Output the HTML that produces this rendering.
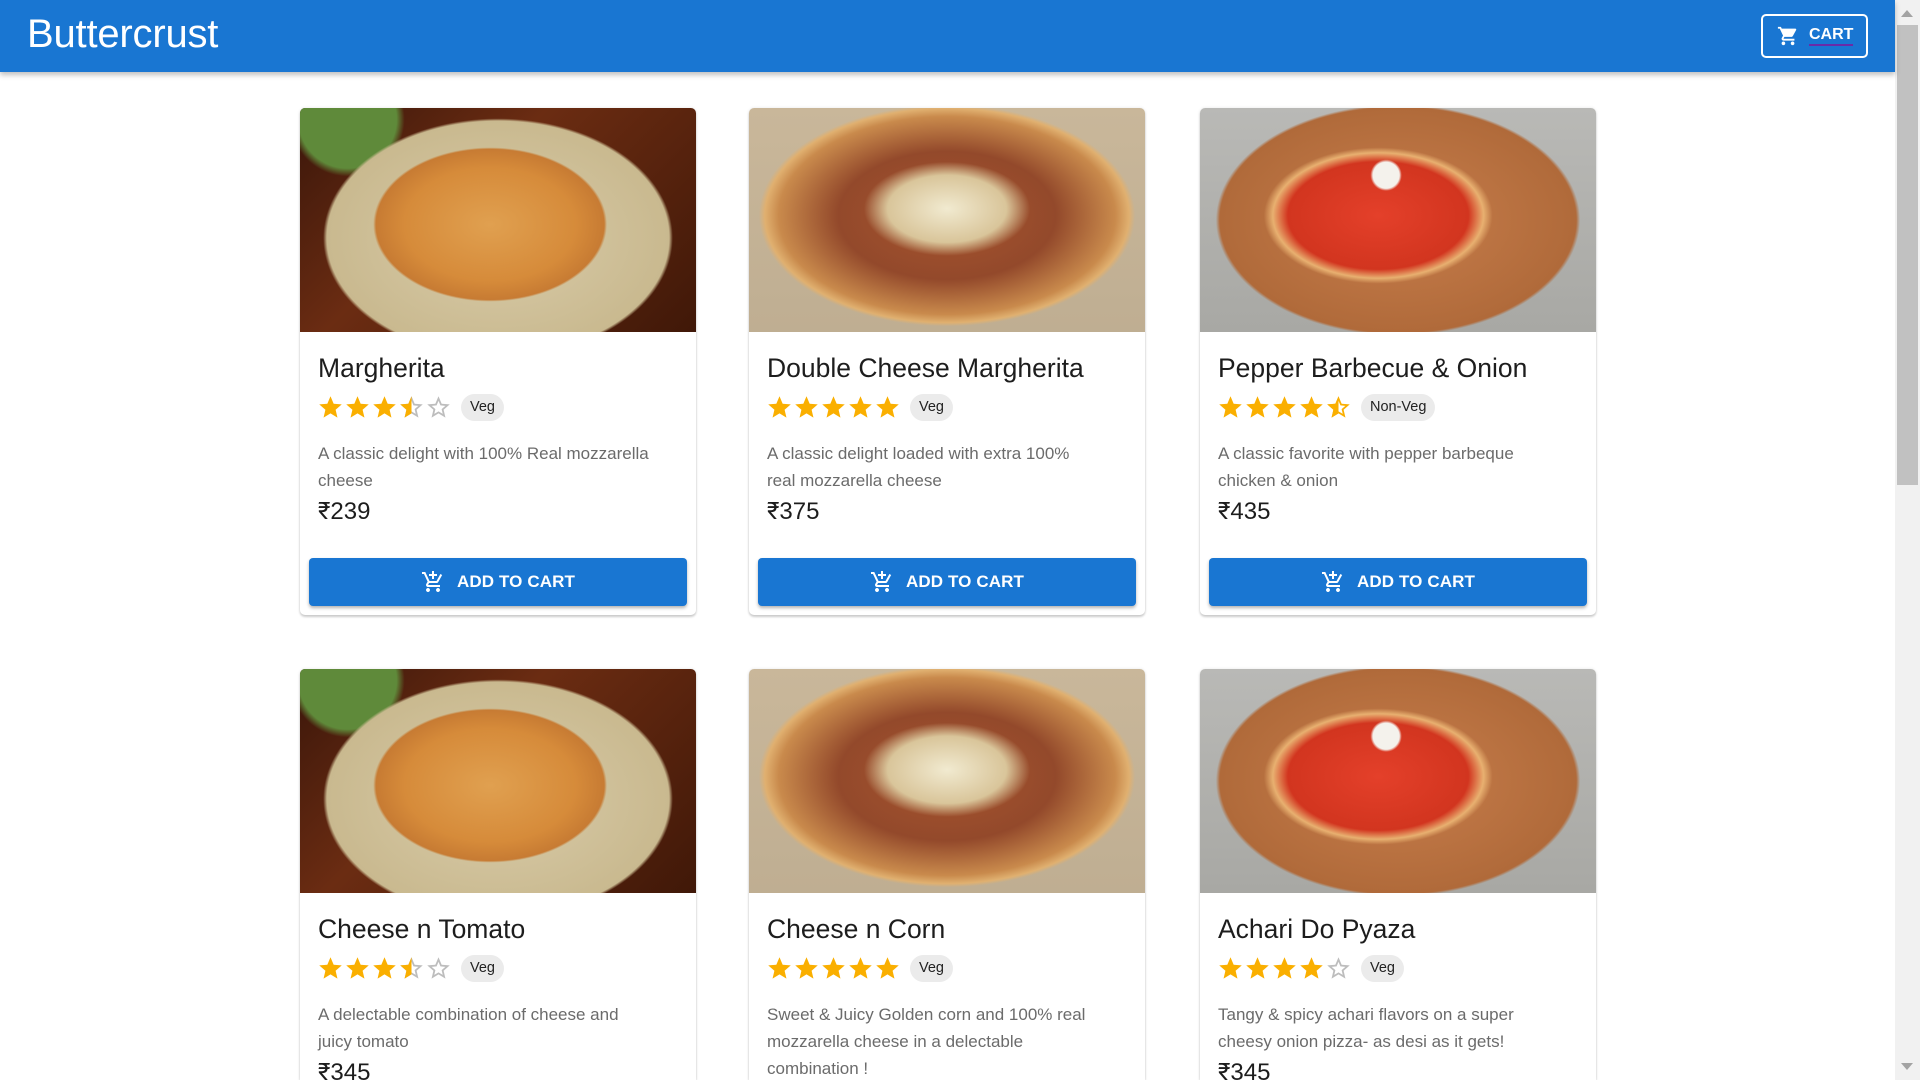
<!DOCTYPE html>
<html style="overflow:hidden;height:1080px"><head><meta charset="utf-8"><style>
*{box-sizing:border-box;margin:0;padding:0}
body{width:1920px;height:1080px;overflow:hidden;background:#fff;font-family:"Liberation Sans",Roboto,sans-serif;position:relative}
#wrap{position:absolute;left:0;top:0;width:1920px;height:1080px;overflow:hidden}
.bar{position:absolute;left:0;top:0;width:1895px;height:72px;background:#1976d2;box-shadow:0 3px 5px rgba(0,0,0,.25);z-index:2}
.bar h1{position:absolute;left:27px;top:12px;color:#fff;font-weight:400;font-size:40px;letter-spacing:-.2px}
.cartbtn{position:absolute;left:1761px;top:14px;width:107px;height:44px;border:2px solid #fff;border-radius:5px;color:#fff;font-weight:700;font-size:16px;display:flex;align-items:center;padding-left:14px}
.cartbtn span{margin-left:10px;border-bottom:2px solid #6a2aa8;line-height:18px}
.sb{position:absolute;left:1895px;top:0;width:25px;height:1080px;background:#f1f1f1}
.sb .th{position:absolute;left:2px;top:25px;width:21px;height:460px;background:#c1c1c1}
.sb .up{position:absolute;left:6px;top:10px;border:6px solid transparent;border-bottom:7px solid #a3a3a3;border-top:0}
.sb .dn{position:absolute;left:6px;top:1063px;border:6px solid transparent;border-top:7px solid #a3a3a3;border-bottom:0}
.card{position:absolute;width:396px;height:507px;background:#fff;border-radius:5px;box-shadow:0 2px 2px rgba(0,0,0,.18),0 0 3px rgba(0,0,0,.1);overflow:hidden}
.card.r2{height:411px;border-bottom-left-radius:0;border-bottom-right-radius:0}
.img{height:224px}
.body{position:relative}
.title{position:absolute;left:18px;top:21px;font-size:26.5px;color:#1d1d1d;white-space:nowrap}
.stars{position:absolute;left:17px;top:62px;display:flex;align-items:center}
.stars svg{width:27px;height:27px}
.chip{margin-left:9px;background:#ebebeb;border-radius:14px;height:27px;padding:0 9px;font-size:14.5px;color:#222;line-height:27px}
.desc{position:absolute;left:18px;top:108px;width:362px;font-size:17px;line-height:27px;color:#6b6b6b}
.price{position:absolute;left:18px;top:165px;font-size:24px;color:#1d1d1d}
.btn{position:absolute;left:9px;top:226px;width:378px;height:48px;background:#1976d2;border-radius:4px;box-shadow:0 2px 3px rgba(0,0,0,.3);color:#fff;font-weight:700;font-size:17px;display:flex;align-items:center;justify-content:center;letter-spacing:.1px}
.btn svg{margin-right:12px}
.p1{background:radial-gradient(ellipse 36% 42% at 48% 52%,#e0a050 0,#d68b3a 60%,#c77b33 80%,transparent 82%),radial-gradient(ellipse 48% 58% at 50% 58%,#d9ccaa 0,#c9b98f 90%,transparent 92%),radial-gradient(circle at 12% 5%,#5f8a3a 0,#5f8a3a 12%,transparent 14%),linear-gradient(135deg,#3a160a,#6b2c12 40%,#401808 100%)}
.p2{background:radial-gradient(ellipse 30% 30% at 50% 45%,#f1ead0 0,#d9c59a 50%,transparent 70%),radial-gradient(ellipse 50% 52% at 50% 48%,#a8552e 0,#93492b 55%,#c98a4c 85%,#e0b070 92%,transparent 95%),linear-gradient(#c9b79a,#bfae92)}
.p3{background:radial-gradient(circle at 47% 30%,#f4f2ec 0,#f4f2ec 5%,transparent 6%),radial-gradient(ellipse 38% 40% at 45% 48%,#e4402a 0,#d2351f 60%,#e8b070 70%,transparent 76%),radial-gradient(ellipse 50% 56% at 50% 50%,#c87e4c 0,#b06a3a 90%,transparent 92%),linear-gradient(#b9b9b6,#a8a8a4)}
</style></head><body><div id="wrap">
<div class="bar"><h1>Buttercrust</h1>
<div class="cartbtn"><svg width="22" height="22" viewBox="0 0 24 24" fill="#fff"><path d="M7 18c-1.1 0-2 .9-2 2s.9 2 2 2 2-.9 2-2-.9-2-2-2zM1 2v2h2l3.6 7.59-1.35 2.45c-.16.28-.25.61-.25.96 0 1.1.9 2 2 2h12v-2H7.42c-.14 0-.25-.11-.25-.25l.03-.12.9-1.63h7.45c.75 0 1.41-.41 1.75-1.03l3.58-6.49A1 1 0 0 0 20 4H5.21l-.94-2H1zm16 16c-1.1 0-2 .9-2 2s.9 2 2 2 2-.9 2-2-.9-2-2-2z"/></svg><span>CART</span></div></div>
<div class="sb"><div class="up"></div><div class="th"></div><div class="dn"></div></div>

<svg width="0" height="0" style="position:absolute"><defs>
<path id="st" d="M12 17.27 18.18 21l-1.64-7.03L22 9.24l-7.19-.61L12 2 9.19 8.63 2 9.24l5.46 4.73L5.82 21z"/>
<path id="so" d="M22 9.24l-7.19-.62L12 2 9.19 8.63 2 9.24l5.46 4.73L5.82 21 12 17.27 18.18 21l-1.63-7.03L22 9.24zM12 15.4l-3.76 2.27 1-4.28-3.32-2.88 4.38-.38L12 6.1l1.71 4.04 4.38.38-3.32 2.88 1 4.28L12 15.4z"/>
<path id="ac" d="M11 9h2V6h3V4h-3V1h-2v3H8v2h3v3zm-4 9c-1.1 0-1.99.9-1.99 2S5.9 22 7 22s2-.9 2-2-.9-2-2-2zm10 0c-1.1 0-1.99.9-1.99 2s.89 2 1.99 2 2-.9 2-2-.9-2-2-2zm-9.83-3.25.03-.12.9-1.63h7.45c.75 0 1.41-.41 1.75-1.03l3.86-7.01L19.42 4h-.01l-1.1 2-2.76 5H8.53l-.13-.27L6.16 6l-.95-2-.94-2H1v2h2l3.6 7.59-1.35 2.45c-.16.28-.25.61-.25.96 0 1.1.9 2 2 2h12v-2H7.42c-.13 0-.25-.11-.25-.25z"/>
</defs></svg>

<div class="card" style="left:300px;top:108px"><div class="img p1"></div><div class="body">
<div class="title">Margherita</div>
<div class="stars"><svg viewBox="0 0 24 24" fill="#faaf00"><use href="#st"/></svg><svg viewBox="0 0 24 24" fill="#faaf00"><use href="#st"/></svg><svg viewBox="0 0 24 24" fill="#faaf00"><use href="#st"/></svg><svg viewBox="0 0 24 24"><use href="#so" fill="#bdbdbd"/><path d="M12 2 9.19 8.63 2 9.24l5.46 4.73L5.82 21 12 17.27z" fill="#faaf00"/></svg><svg viewBox="0 0 24 24" fill="#bdbdbd"><use href="#so"/></svg><span class="chip">Veg</span></div>
<div class="desc">A classic delight with 100% Real mozzarella cheese</div>
<div class="price">₹239</div>
<div class="btn"><svg width="24" height="24" viewBox="0 0 24 24" fill="#fff"><use href="#ac"/></svg>ADD TO CART</div></div></div>

<div class="card" style="left:749px;top:108px"><div class="img p2"></div><div class="body">
<div class="title">Double Cheese Margherita</div>
<div class="stars"><svg viewBox="0 0 24 24" fill="#faaf00"><use href="#st"/></svg><svg viewBox="0 0 24 24" fill="#faaf00"><use href="#st"/></svg><svg viewBox="0 0 24 24" fill="#faaf00"><use href="#st"/></svg><svg viewBox="0 0 24 24" fill="#faaf00"><use href="#st"/></svg><svg viewBox="0 0 24 24" fill="#faaf00"><use href="#st"/></svg><span class="chip">Veg</span></div>
<div class="desc">A classic delight loaded with extra 100%<br>real mozzarella cheese</div>
<div class="price">₹375</div>
<div class="btn"><svg width="24" height="24" viewBox="0 0 24 24" fill="#fff"><use href="#ac"/></svg>ADD TO CART</div></div></div>

<div class="card" style="left:1200px;top:108px"><div class="img p3"></div><div class="body">
<div class="title">Pepper Barbecue &amp; Onion</div>
<div class="stars"><svg viewBox="0 0 24 24" fill="#faaf00"><use href="#st"/></svg><svg viewBox="0 0 24 24" fill="#faaf00"><use href="#st"/></svg><svg viewBox="0 0 24 24" fill="#faaf00"><use href="#st"/></svg><svg viewBox="0 0 24 24" fill="#faaf00"><use href="#st"/></svg><svg viewBox="0 0 24 24"><use href="#so" fill="#faaf00"/><path d="M12 2 9.19 8.63 2 9.24l5.46 4.73L5.82 21 12 17.27z" fill="#faaf00"/></svg><span class="chip">Non-Veg</span></div>
<div class="desc">A classic favorite with pepper barbeque<br>chicken &amp; onion</div>
<div class="price">₹435</div>
<div class="btn"><svg width="24" height="24" viewBox="0 0 24 24" fill="#fff"><use href="#ac"/></svg>ADD TO CART</div></div></div>

<div class="card r2" style="left:300px;top:669px"><div class="img p1"></div><div class="body">
<div class="title">Cheese n Tomato</div>
<div class="stars"><svg viewBox="0 0 24 24" fill="#faaf00"><use href="#st"/></svg><svg viewBox="0 0 24 24" fill="#faaf00"><use href="#st"/></svg><svg viewBox="0 0 24 24" fill="#faaf00"><use href="#st"/></svg><svg viewBox="0 0 24 24"><use href="#so" fill="#bdbdbd"/><path d="M12 2 9.19 8.63 2 9.24l5.46 4.73L5.82 21 12 17.27z" fill="#faaf00"/></svg><svg viewBox="0 0 24 24" fill="#bdbdbd"><use href="#so"/></svg><span class="chip">Veg</span></div>
<div class="desc">A delectable combination of cheese and<br>juicy tomato</div>
<div class="price">₹345</div></div></div>

<div class="card r2" style="left:749px;top:669px"><div class="img p2"></div><div class="body">
<div class="title">Cheese n Corn</div>
<div class="stars"><svg viewBox="0 0 24 24" fill="#faaf00"><use href="#st"/></svg><svg viewBox="0 0 24 24" fill="#faaf00"><use href="#st"/></svg><svg viewBox="0 0 24 24" fill="#faaf00"><use href="#st"/></svg><svg viewBox="0 0 24 24" fill="#faaf00"><use href="#st"/></svg><svg viewBox="0 0 24 24" fill="#faaf00"><use href="#st"/></svg><span class="chip">Veg</span></div>
<div class="desc">Sweet &amp; Juicy Golden corn and 100% real<br>mozzarella cheese in a delectable<br>combination !</div></div></div>

<div class="card r2" style="left:1200px;top:669px"><div class="img p3"></div><div class="body">
<div class="title">Achari Do Pyaza</div>
<div class="stars"><svg viewBox="0 0 24 24" fill="#faaf00"><use href="#st"/></svg><svg viewBox="0 0 24 24" fill="#faaf00"><use href="#st"/></svg><svg viewBox="0 0 24 24" fill="#faaf00"><use href="#st"/></svg><svg viewBox="0 0 24 24" fill="#faaf00"><use href="#st"/></svg><svg viewBox="0 0 24 24" fill="#bdbdbd"><use href="#so"/></svg><span class="chip">Veg</span></div>
<div class="desc">Tangy &amp; spicy achari flavors on a super<br>cheesy onion pizza- as desi as it gets!</div>
<div class="price">₹345</div></div></div>
</div></body></html>
